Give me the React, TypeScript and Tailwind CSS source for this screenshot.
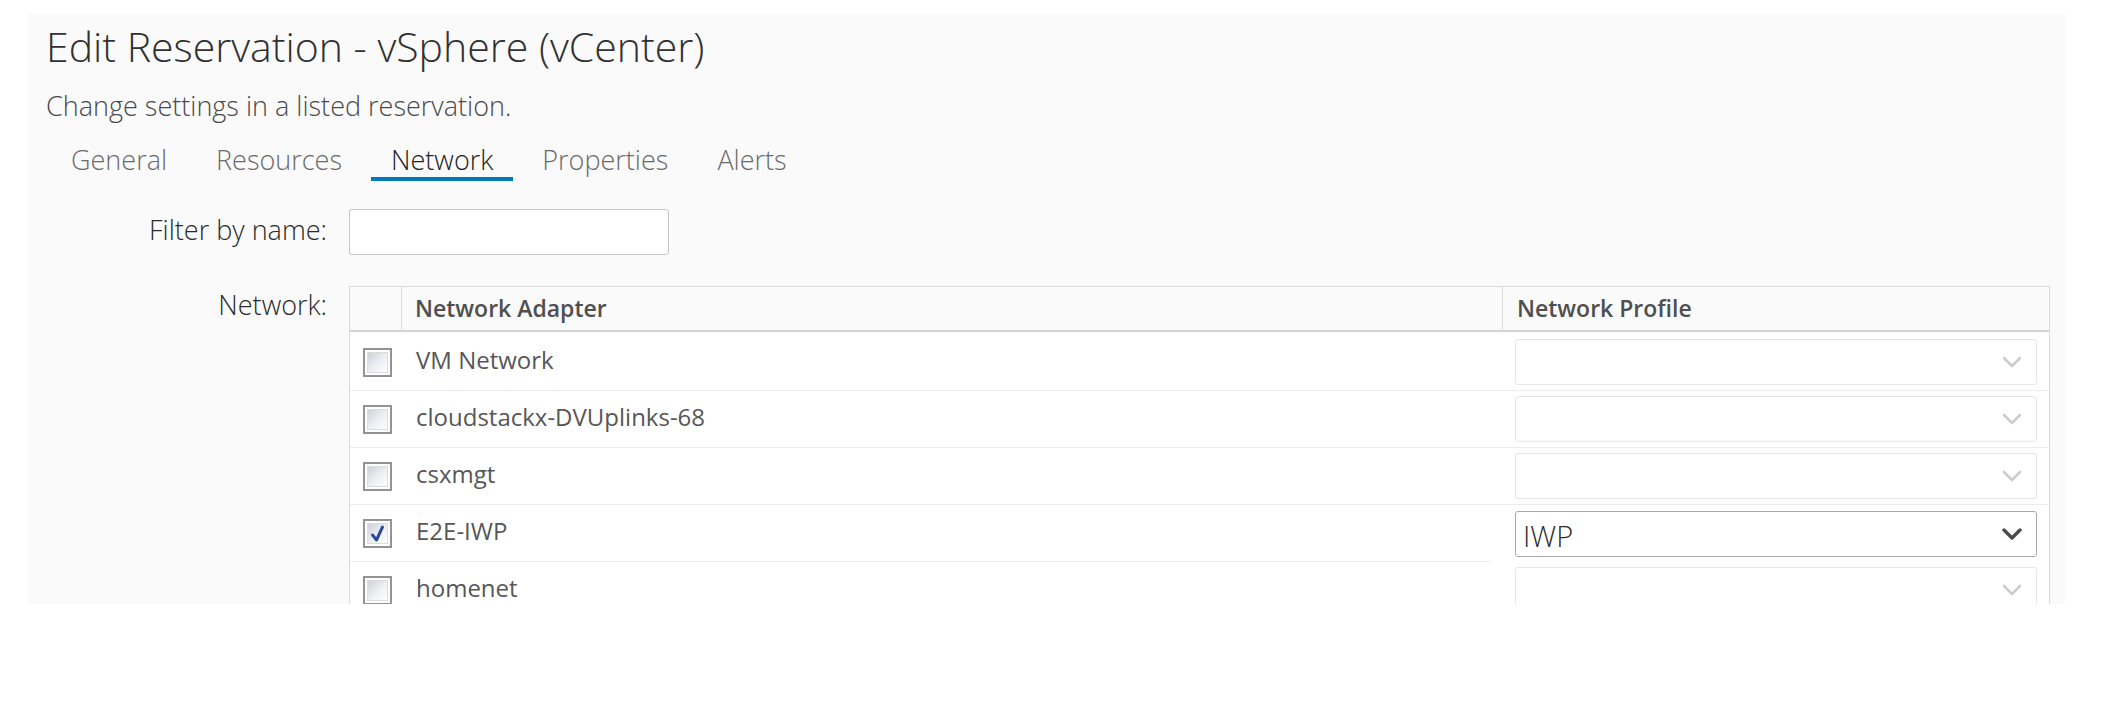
import React from 'react';

type Row = { name: string; checked: boolean; profile: string };

const rows: Row[] = [
  { name: 'VM Network', checked: false, profile: '' },
  { name: 'cloudstackx-DVUplinks-68', checked: false, profile: '' },
  { name: 'csxmgt', checked: false, profile: '' },
  { name: 'E2E-IWP', checked: true, profile: 'IWP' },
  { name: 'homenet', checked: false, profile: '' },
];

const tabs = ['General', 'Resources', 'Network', 'Properties', 'Alerts'];

const Chevron = ({ active }: { active: boolean }) => (
  <svg width="20" height="12" viewBox="0 0 20 12" fill="none">
    <path
      d="M2 2 L10 10 L18 2"
      stroke={active ? '#4b4b4b' : '#cdcdcd'}
      strokeWidth={active ? 3.4 : 2.6}
      strokeLinecap="round"
      strokeLinejoin="round"
    />
  </svg>
);

const Checkbox = ({ checked }: { checked: boolean }) => (
  <div className="relative w-[29px] h-[29px] border-2 border-[#939393] bg-white p-[2px]">
    <div className="w-full h-full border border-[#dcdcdc] bg-gradient-to-br from-[#cdd0d8] via-[#eceef1] to-white" />
    {checked && (
      <svg className="absolute left-[4px] top-[3px]" width="18" height="20" viewBox="0 0 18 20" fill="none">
        <path d="M3.5 11 L7.5 16 L13.5 3" stroke="#2f4c9c" strokeWidth="3" strokeLinecap="round" strokeLinejoin="round" />
      </svg>
    )}
  </div>
);

const ProfileSelect = ({ value }: { value: string }) => {
  const active = value !== '';
  return (
    <div
      className={
        active
          ? 'flex h-[46px] w-full items-center justify-between rounded-[3px] border border-[#a9a9a9] bg-white pl-[7px] pr-[14px]'
          : 'flex h-[46px] w-full items-center justify-between rounded-[3px] border border-[#e6e6e6] bg-white pl-[7px] pr-[14px]'
      }
    >
      <span className="pt-[4px] text-[29px] font-light text-[#2e2e2e] leading-none">{value}</span>
      <Chevron active={active} />
    </div>
  );
};

const App = () => {
  return (
    <div className="w-[2102px] h-[725px] bg-white pt-[14px] pl-[28px] font-['Open_Sans',sans-serif]">
      <div className="w-[2037px] h-[590px] overflow-hidden bg-[#fafafa] pt-[12px] pl-[18px]">
        <h1 className="h-[40px] text-[41px] leading-[40px] font-light text-[#313131]">
          Edit Reservation - vSphere (vCenter)
        </h1>
        <p className="mt-[25px] text-[27px] leading-[30px] font-light text-[#4a4a4a]">
          Change settings in a listed reservation.
        </p>

        <div className="mt-[19px] ml-[5px] flex gap-[9px]">
          {tabs.map((t) => (
            <div
              key={t}
              className={
                t === 'Network'
                  ? 'px-[20px] pt-[5px] pb-[2px] border-b-4 border-[#0079b8] text-[27px] leading-[30px] font-light text-[#222222]'
                  : 'px-[20px] pt-[5px] pb-[2px] border-b-4 border-transparent text-[27px] leading-[30px] font-light text-[#6b6b6b]'
              }
            >
              {t}
            </div>
          ))}
        </div>

        <div className="mt-[28px] flex items-center">
          <label className="w-[281px] pb-[4px] text-right text-[27px] leading-[30px] font-light text-[#2b2b2b]">
            Filter by name:
          </label>
          <input className="ml-[22px] h-[46px] w-[320px] rounded-[3px] border border-[#c8c8c8] bg-white outline-none" />
        </div>

        <div className="mt-[31px] flex items-start">
          <div className="w-[281px] pt-[4px] text-right text-[27px] leading-[30px] font-light text-[#2b2b2b]">Network:</div>
          <div className="ml-[22px] w-[1701px] border-x border-t border-[#d9d9d9] bg-white">
            <div className="grid h-[45px] grid-cols-[52px_1101px_1fr] border-b-2 border-[#d4d4d4] bg-[#fafafa]">
              <div className="border-r border-[#dcdcdc]" />
              <div className="flex items-center border-r border-[#dcdcdc] pl-[13px] text-[23px] font-semibold text-[#4f4f4f]">
                Network Adapter
              </div>
              <div className="flex items-center pl-[14px] text-[23px] font-semibold text-[#4f4f4f]">Network Profile</div>
            </div>
            <div className="pt-[2px]">
              {rows.map((r, i) => (
                <div key={r.name} className="grid h-[57px] grid-cols-[52px_1101px_1fr]">
                  <div className="flex items-center pl-[13px] border-b border-[#ececec]">
                    <Checkbox checked={r.checked} />
                  </div>
                  <div
                    className={
                      i === 3
                        ? 'flex items-center text-[24px] leading-[30px] text-[#575757]'
                        : 'flex items-center pl-[14px] pb-[5px] text-[24px] leading-[30px] text-[#575757] border-b border-[#ececec]'
                    }
                  >
                    {i === 3 ? (
                      <span className="flex h-full w-[1088px] items-center border-b border-[#ececec] pl-[14px] pb-[5px]">
                        {r.name}
                      </span>
                    ) : (
                      r.name
                    )}
                  </div>
                  <div
                    className={
                      i === 3
                        ? 'flex items-center pl-[12px] pr-[12px]'
                        : 'flex items-center pl-[12px] pr-[12px] border-b border-[#ececec]'
                    }
                  >
                    <ProfileSelect value={r.profile} />
                  </div>
                </div>
              ))}
            </div>
          </div>
        </div>
      </div>
    </div>
  );
};

export default App;
